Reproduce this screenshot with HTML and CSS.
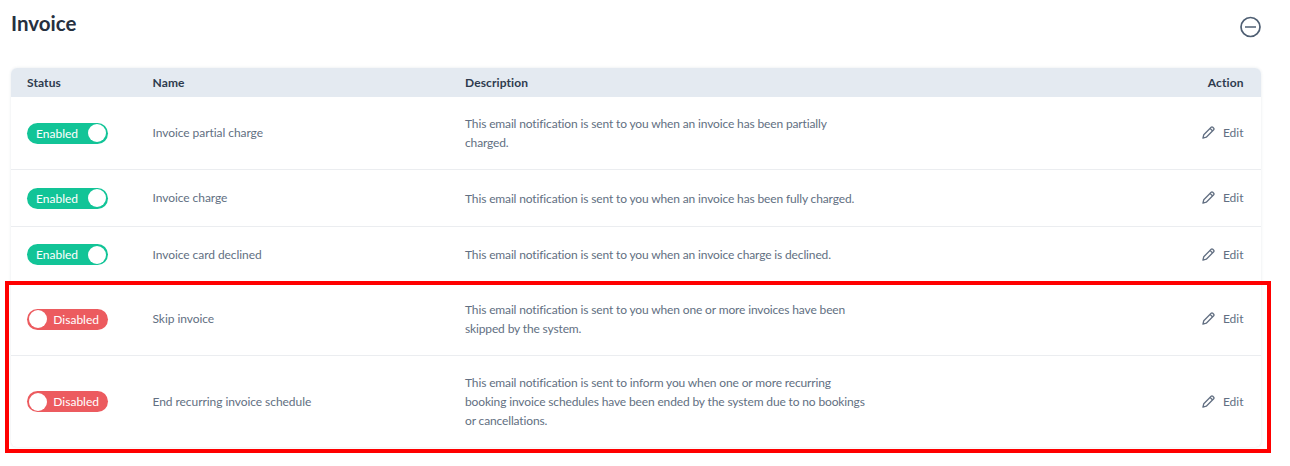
FILE: index.html
```html
<!DOCTYPE html>
<html lang="en">
<head>
<meta charset="utf-8">
<title>Invoice</title>
<link rel="stylesheet" href="styles.css">
</head>
<body>
<div class="page">
  <header class="head">
    <h1 class="title">Invoice</h1>
    <svg class="collapse" width="22" height="22" viewBox="0 0 22 22"><circle cx="11" cy="11" r="9.5"/><path d="M5.5 11h11"/></svg>
  </header>
  <section class="table">
    <div class="row row-head">
      <div>Status</div><div>Name</div><div>Description</div><div class="right">Action</div>
    </div>
    <div class="row r1">
      <div><span class="toggle on">Enabled<i class="knob"></i></span></div>
      <div class="name">Invoice partial charge</div>
      <div class="desc">This email notification is sent to you when an invoice has been partially charged.</div>
      <div class="edit"><svg width="13" height="13" viewBox="0 0 14 14"><path d="M1 13l.9-3.6L9.9 1.4a1.2 1.2 0 0 1 1.7 0l1 1a1.2 1.2 0 0 1 0 1.7L4.6 12.1zM8.7 2.6l2.7 2.7"/></svg>Edit</div>
    </div>
    <div class="row r2">
      <div><span class="toggle on">Enabled<i class="knob"></i></span></div>
      <div class="name">Invoice charge</div>
      <div class="desc">This email notification is sent to you when an invoice has been fully charged.</div>
      <div class="edit"><svg width="13" height="13" viewBox="0 0 14 14"><path d="M1 13l.9-3.6L9.9 1.4a1.2 1.2 0 0 1 1.7 0l1 1a1.2 1.2 0 0 1 0 1.7L4.6 12.1zM8.7 2.6l2.7 2.7"/></svg>Edit</div>
    </div>
    <div class="row r3">
      <div><span class="toggle on">Enabled<i class="knob"></i></span></div>
      <div class="name">Invoice card declined</div>
      <div class="desc">This email notification is sent to you when an invoice charge is declined.</div>
      <div class="edit"><svg width="13" height="13" viewBox="0 0 14 14"><path d="M1 13l.9-3.6L9.9 1.4a1.2 1.2 0 0 1 1.7 0l1 1a1.2 1.2 0 0 1 0 1.7L4.6 12.1zM8.7 2.6l2.7 2.7"/></svg>Edit</div>
    </div>
    <div class="row r4">
      <div><span class="toggle off"><i class="knob"></i>Disabled</span></div>
      <div class="name">Skip invoice</div>
      <div class="desc">This email notification is sent to you when one or more invoices have been skipped by the system.</div>
      <div class="edit"><svg width="13" height="13" viewBox="0 0 14 14"><path d="M1 13l.9-3.6L9.9 1.4a1.2 1.2 0 0 1 1.7 0l1 1a1.2 1.2 0 0 1 0 1.7L4.6 12.1zM8.7 2.6l2.7 2.7"/></svg>Edit</div>
    </div>
    <div class="row r5">
      <div><span class="toggle off"><i class="knob"></i>Disabled</span></div>
      <div class="name">End recurring invoice schedule</div>
      <div class="desc">This email notification is sent to inform you when one or more recurring booking invoice schedules have been ended by the system due to no bookings or cancellations.</div>
      <div class="edit"><svg width="13" height="13" viewBox="0 0 14 14"><path d="M1 13l.9-3.6L9.9 1.4a1.2 1.2 0 0 1 1.7 0l1 1a1.2 1.2 0 0 1 0 1.7L4.6 12.1zM8.7 2.6l2.7 2.7"/></svg>Edit</div>
    </div>
  </section>
  <div class="highlight"></div>
</div>
</body>
</html>
```
FILE: styles.css
```css
html, body { margin: 0; padding: 0; background: #fff; }
body { width: 1290px; height: 466px; overflow: hidden; font-family: Lato, "Open Sans", sans-serif; color: #626f82; font-size: 12px; }
.page { position: relative; padding: 0 29px 0 11px; height: 466px; box-sizing: border-box; }
.head { display: flex; justify-content: space-between; height: 68px; }
.title { margin: 8.5px 0 0; font-size: 20.5px; line-height: 29px; font-weight: 700; color: #26303f; }
.collapse { margin: 15.5px 0 0; transform: translateX(0.5px); }
.collapse circle, .collapse path { fill: none; stroke: #4f5f73; stroke-width: 1.7; }
.table { width: 1250px; border-radius: 6px; box-shadow: 0 0 3px rgba(60, 80, 110, .12); background: #fff; overflow: hidden; }
.row { display: grid; grid-template-columns: 125.5px 312.5px 405px 1fr; padding: 0 17.5px 0 16px; align-items: center; border-bottom: 1px solid #ebedf0; line-height: 19px; }
.row-head { height: 29px; background: #e4eaf1; color: #2e3b4e; font-weight: 700; border-bottom: 0; letter-spacing: .1px; }
.r1 { height: 72px; }
.r2 { height: 56px; }
.r3 { height: 55px; }
.r4 { height: 72px; }
.r5 { height: 91px; border-bottom: 0; }
.name { letter-spacing: -.06px; padding-bottom: 1px; }
.desc { letter-spacing: -.14px; }
.right { text-align: right; }
.toggle { display: flex; align-items: center; justify-content: space-between; box-sizing: border-box; width: 81px; height: 21px; border-radius: 11px; color: #fff; padding: 0 2px; }
.on { background: #12c497; padding-left: 9px; }
.off { background: #ec5b5f; padding-right: 9px; }
.knob { display: block; width: 18px; height: 18px; border-radius: 50%; background: #fff; }
.edit { display: flex; justify-content: flex-end; align-items: center; gap: 8px; padding-bottom: 1px; }
.edit svg { fill: none; stroke: #626f82; stroke-width: 1.4; stroke-linejoin: round; }
.highlight { position: absolute; left: 5px; top: 281px; width: 1266px; height: 172px; box-sizing: border-box; border: 4px solid #f00; }
```
